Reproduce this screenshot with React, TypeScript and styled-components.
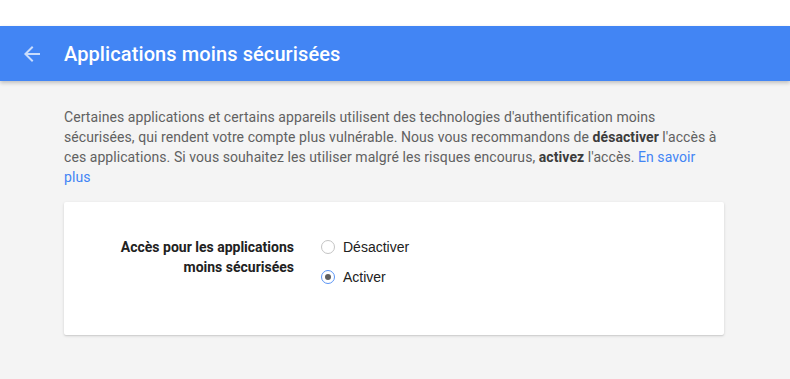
import React, { useState } from "react";
import styled, { createGlobalStyle } from "styled-components";

const Global = createGlobalStyle`
  html, body { margin: 0; padding: 0; background: #f4f4f4; }
  body { font-family: Roboto, "Noto Sans", Arial, sans-serif; }
`;

const Page = styled.div`
  min-height: 379px;
  background: #f4f4f4;
`;

const TopStrip = styled.div`
  height: 26px;
  background: #ffffff;
`;

const Header = styled.header`
  height: 55px;
  background: #4285f4;
  display: flex;
  align-items: center;
  box-shadow: 0 2px 4px rgba(0, 0, 0, 0.22);
  position: relative;
  z-index: 1;
`;

const BackButton = styled.button`
  width: 64px;
  height: 55px;
  border: 0;
  background: transparent;
  padding: 0 0 0 20px;
  display: flex;
  align-items: center;
  cursor: pointer;
  color: rgba(255, 255, 255, 0.72);
`;

const Title = styled.h1`
  margin: 0;
  font-family: Roboto, Arial, sans-serif;
  font-size: 20px;
  font-weight: 500;
  color: #ffffff;
  letter-spacing: 0.1px;
`;

const Main = styled.main`
  width: 655px;
  padding: 26px 0 0 64px;
`;

const Intro = styled.p`
  margin: 0 0 15px;
  font-size: 14px;
  line-height: 20px;
  letter-spacing: 0.07px;
  color: #616161;
  b { color: #3c3c3c; font-weight: 700; }
`;

const Link = styled.a`
  color: #4285f4;
  text-decoration: none;
`;

const Card = styled.section`
  width: 660px;
  box-sizing: border-box;
  background: #ffffff;
  border-radius: 2px;
  box-shadow: 0 1px 3px rgba(0, 0, 0, 0.14), 0 1px 1px rgba(0, 0, 0, 0.06);
  padding: 35px 0 48px;
  display: grid;
  grid-template-columns: 230px 1fr;
  column-gap: 27px;
`;

const FieldLabel = styled.div`
  text-align: right;
  font-size: 14px;
  font-weight: 700;
  line-height: 20px;
  color: #212121;
`;

const Options = styled.div`
  display: flex;
  flex-direction: column;
  gap: 10px;
`;

const Option = styled.label`
  display: flex;
  align-items: center;
  height: 20px;
  gap: 8px;
  font-family: "Liberation Sans", Arial, sans-serif;
  font-size: 14px;
  color: #212121;
  cursor: pointer;
`;

const Circle = styled.span<{ $checked: boolean }>`
  box-sizing: border-box;
  width: 14px;
  height: 14px;
  border-radius: 50%;
  border: 1px solid ${(p) => (p.$checked ? "#5a95f5" : "#c4c4c4")};
  background: #ffffff;
  display: flex;
  align-items: center;
  justify-content: center;
  margin-top: -1px;
  &::after {
    content: "";
    width: 6px;
    height: 6px;
    border-radius: 50%;
    background: ${(p) => (p.$checked ? "#5f5f5f" : "transparent")};
  }
`;

export default function App() {
  const [value, setValue] = useState("on");
  const opts = [
    { id: "off", label: "Désactiver" },
    { id: "on", label: "Activer" },
  ];
  return (
    <Page>
      <Global />
      <TopStrip />
      <Header>
        <BackButton aria-label="Retour">
          <svg width="24" height="24" viewBox="0 0 24 24" fill="currentColor">
            <path d="M20 11H7.83l5.59-5.59L12 4l-8 8 8 8 1.41-1.41L7.83 13H20v-2z" />
          </svg>
        </BackButton>
        <Title>Applications moins sécurisées</Title>
      </Header>
      <Main>
        <Intro>
          Certaines applications et certains appareils utilisent des technologies d'authentification moins
          sécurisées, qui rendent votre compte plus vulnérable. Nous vous recommandons de <b>désactiver</b> l'accès à
          ces applications. Si vous souhaitez les utiliser malgré les risques encourus, <b>activez</b> l'accès.{" "}
          <Link href="#">En savoir plus</Link>
        </Intro>
        <Card>
          <FieldLabel>
            Accès pour les applications
            <br />
            moins sécurisées
          </FieldLabel>
          <Options>
            {opts.map((o) => (
              <Option key={o.id} onClick={() => setValue(o.id)}>
                <Circle $checked={value === o.id} />
                {o.label}
              </Option>
            ))}
          </Options>
        </Card>
      </Main>
    </Page>
  );
}
